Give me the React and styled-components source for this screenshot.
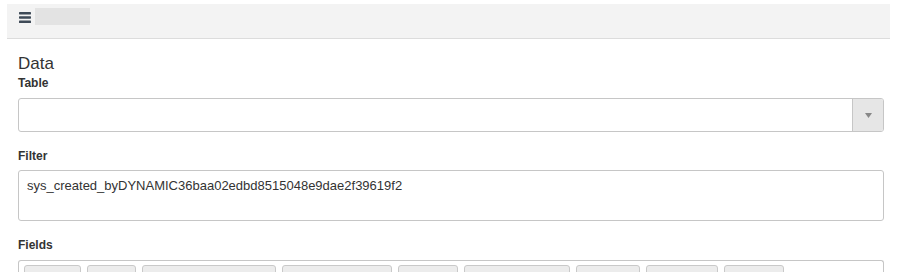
import React from 'react';
import styled, { createGlobalStyle } from 'styled-components';

const GlobalStyle = createGlobalStyle`
  body {
    margin: 0;
    background: #fff;
    font-family: "Liberation Sans", Arial, sans-serif;
    color: #333;
  }
`;

const Page = styled.div`
  padding: 4px 10px 0 7px;
  height: 268px;
  overflow: hidden;
`;

const Header = styled.div`
  height: 34px;
  background: #f3f3f3;
  border-bottom: 1px solid #dcdcdc;
  display: flex;
  align-items: flex-start;
  gap: 4px;
  padding-left: 12px;
`;

const MenuIcon = styled.svg`
  margin-top: 8px;
  display: block;
`;

const TitlePlaceholder = styled.div`
  width: 55px;
  height: 17px;
  margin-top: 4px;
  background: #e3e3e3;
`;

const Content = styled.div`
  padding: 0 6px 0 11px;
`;

const SectionTitle = styled.h3`
  margin: 15px 0 0;
  font-size: 17px;
  font-weight: normal;
  line-height: 20px;
  color: #333;
`;

const Label = styled.label`
  display: block;
  font-size: 12px;
  font-weight: bold;
  line-height: 15px;
  color: #333;
  margin: ${(p) => p.$top || 0}px 0 ${(p) => p.$bottom || 0}px;
`;

const Select = styled.div`
  height: 32px;
  border: 1px solid #c6c6c6;
  border-radius: 3px;
  display: flex;
  justify-content: flex-end;
  overflow: hidden;
`;

const SelectButton = styled.div`
  width: 30px;
  background: #e6e6e6;
  border-left: 1px solid #c6c6c6;
  display: flex;
  align-items: center;
  justify-content: center;
  svg {
    display: block;
  }
`;

const TextArea = styled.div`
  height: 35px;
  border: 1px solid #c6c6c6;
  border-radius: 3px;
  padding: 7px 8px 7px 8px;
  font-size: 13px;
  line-height: 15px;
  color: #333;
`;

const FieldBox = styled.div`
  border: 1px solid #c6c6c6;
  border-bottom: none;
  border-radius: 3px 3px 0 0;
  padding: 4px 5px 0;
  display: flex;
  gap: 6px;
  height: 30px;
  overflow: hidden;
`;

const Tag = styled.div`
  flex: none;
  height: 26px;
  box-sizing: border-box;
  background: #ececec;
  border: 1px solid #c9c9c9;
  border-radius: 3px;
  font-size: 12px;
  line-height: 14px;
  padding: 4px 6px 0;
  color: #333;
  text-align: center;
  white-space: nowrap;
  overflow: hidden;
`;

const fields = [
  { name: 'number', w: 57 },
  { name: 'name', w: 49 },
  { name: 'sys_created_on', w: 134 },
  { name: 'assignment_group', w: 110 },
  { name: 'priority', w: 60 },
  { name: 'assigned_to', w: 106 },
  { name: 'state', w: 64 },
  { name: 'category', w: 72 },
  { name: 'caller', w: 60 },
];

export default function App() {
  return (
    <>
      <GlobalStyle />
      <Page>
        <Header>
          <MenuIcon width="12" height="11" viewBox="0 0 12 11">
            <rect x="0" y="0" width="12" height="2.4" rx="0.6" fill="#3e4a57" />
            <rect x="0" y="4.3" width="12" height="2.4" rx="0.6" fill="#3e4a57" />
            <rect x="0" y="8.6" width="12" height="2.4" rx="0.6" fill="#3e4a57" />
          </MenuIcon>
          <TitlePlaceholder />
        </Header>
        <Content>
          <SectionTitle>Data</SectionTitle>
          <Label $top={2} $bottom={7}>Table</Label>
          <Select>
            <SelectButton>
              <svg width="7" height="5" viewBox="0 0 7 5">
                <path d="M0 0 L7 0 L3.5 5 Z" fill="#888" />
              </svg>
            </SelectButton>
          </Select>
          <Label $top={17} $bottom={6}>Filter</Label>
          <TextArea>sys_created_byDYNAMIC36baa02edbd8515048e9dae2f39619f2</TextArea>
          <Label $top={17} $bottom={7}>Fields</Label>
          <FieldBox>
            {fields.map((f) => (
              <Tag key={f.name} style={{ width: f.w }}>{f.name}</Tag>
            ))}
          </FieldBox>
        </Content>
      </Page>
    </>
  );
}
